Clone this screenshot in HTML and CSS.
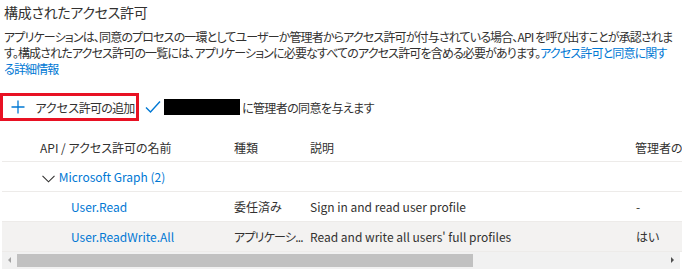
FILE: index.html
```html
<!DOCTYPE html>
<html lang="ja">
<head>
    <meta charset="UTF-8">
    <meta name="viewport" content="width=device-width, initial-scale=1.0">
    <title>構成されたアクセス許可</title>
    <link rel="stylesheet" href="styles.css">
</head>
<body>
<div class="page">
    <h2 class="title">構成されたアクセス許可</h2>
    <p class="desc">アプリケーションは、同意のプロセスの一環としてユーザーか管理者からアクセス許可が付与されている場合、API を呼び出すことが承認されます。構成されたアクセス許可の一覧には、アプリケーションに必要なすべてのアクセス許可を含める必要があります。<a href="#">アクセス許可と同意に関する詳細情報</a></p>

    <div class="toolbar">
        <button class="add-btn">
            <svg width="14" height="14" viewBox="0 0 14 14"><path d="M7 0.5v13M0.5 7h13" stroke="#0078d4" stroke-width="1.3" fill="none"/></svg>
            <span>アクセス許可の追加</span>
        </button>
        <div class="consent">
            <svg width="16" height="14" viewBox="0 0 16 14"><path d="M1 7.5l4.5 4.5L15 1.5" stroke="#0078d4" stroke-width="1.4" fill="none"/></svg>
            <span class="redact"></span>
            <span>に管理者の同意を与えます</span>
        </div>
    </div>

    <div class="grid-wrap">
        <table class="grid">
            <thead>
                <tr>
                    <th class="c-name">API / アクセス許可の名前</th>
                    <th class="c-type">種類</th>
                    <th class="c-desc">説明</th>
                    <th class="c-admin">管理者の同意が必要</th>
                </tr>
            </thead>
            <tbody>
                <tr class="group">
                    <td colspan="4">
                        <svg width="13" height="8" viewBox="0 0 13 8"><path d="M0.5 0.8l6 6 6-6" stroke="#323130" stroke-width="1.1" fill="none"/></svg>
                        <a href="#">Microsoft Graph (2)</a>
                    </td>
                </tr>
                <tr>
                    <td class="perm"><a href="#">User.Read</a></td>
                    <td>委任済み</td>
                    <td>Sign in and read user profile</td>
                    <td class="admin">-</td>
                </tr>
                <tr class="sel">
                    <td class="perm"><a href="#">User.ReadWrite.All</a></td>
                    <td class="cut">アプリケーシ...</td>
                    <td>Read and write all users' full profiles</td>
                    <td class="admin">はい</td>
                </tr>
            </tbody>
        </table>
    </div>
    <div class="hscroll">
        <span class="arrow left"></span>
        <div class="track"><div class="thumb"></div></div>
        <span class="arrow right"></span>
    </div>
</div>
</body>
</html>
```

FILE: styles.css
```css
body {
    margin: 0;
    background: #fff;
    color: #323130;
    font-family: "Noto Sans CJK JP", "Noto Sans", sans-serif;
    font-feature-settings: "palt";
}
a {
    color: #0078d4;
    text-decoration: none;
}
.page {
    width: 680px;
    padding: 0 0 0 2px;
}
.title {
    margin: 0;
    padding: 2px 0 0 2px;
    font-size: 14px;
    font-weight: normal;
    line-height: 20px;
    letter-spacing: -0.3px;
}
.desc {
    width: 672px;
    margin: 7px 0 0 2px;
    font-size: 12px;
    line-height: 16px;
    letter-spacing: -0.85px;
}
.toolbar {
    display: flex;
    align-items: center;
    margin-top: 16px;
    height: 28px;
    letter-spacing: -0.6px;
}
.add-btn {
    display: flex;
    align-items: center;
    gap: 10px;
    height: 28px;
    width: 139px;
    margin-left: -2px;
    padding: 0 0 0 8px;
    border: 3px solid #e81123;
    background: #fff;
    color: #323130;
    font-family: inherit;
    font-size: 12px;
    letter-spacing: -0.9px;
    white-space: nowrap;
}
.consent {
    display: flex;
    align-items: center;
    margin-left: 6px;
    font-size: 12px;
}
.redact {
    display: inline-block;
    width: 76px;
    height: 16px;
    margin: 0 2px 0 3px;
    background: #000;
}
.grid-wrap {
    margin-top: 12px;
    overflow: hidden;
}
.grid {
    border-collapse: collapse;
    width: 760px;
    font-size: 12px;
    table-layout: fixed;
}
.grid th {
    text-align: left;
    font-weight: normal;
    height: 28px;
    padding: 0;
    border-bottom: 1px solid #edebe9;
    white-space: nowrap;
}
.grid td {
    height: 29px;
    padding: 0;
    border-bottom: 1px solid #edebe9;
    white-space: nowrap;
}
.c-name { width: 194px; padding-left: 38px !important; }
.c-type { width: 76px; }
.c-desc { width: 325px; }
.group td {
    padding-left: 40px;
}
.group svg {
    vertical-align: middle;
    margin-right: 1px;
}
.perm {
    padding-left: 69px !important;
}
.cut {
    overflow: hidden;
    letter-spacing: -0.8px;
}
.sel td {
    background: #f3f2f1;
}
.admin {
    padding-left: 1px !important;
}
.hscroll {
    display: flex;
    align-items: center;
    width: 678px;
    height: 17px;
    background: #f1f1f1;
}
.track {
    flex: 1;
    height: 13px;
}
.thumb {
    width: 456px;
    height: 13px;
    background: #c1c1c1;
}
.arrow {
    width: 15px;
    height: 17px;
    position: relative;
}
.arrow::after {
    content: "";
    position: absolute;
    top: 5px;
    border-top: 3px solid transparent;
    border-bottom: 3px solid transparent;
}
.arrow.left::after {
    left: 6px;
    border-right: 3px solid #a3a3a3;
}
.arrow.right::after {
    left: 6px;
    border-left: 3px solid #505050;
}
```
